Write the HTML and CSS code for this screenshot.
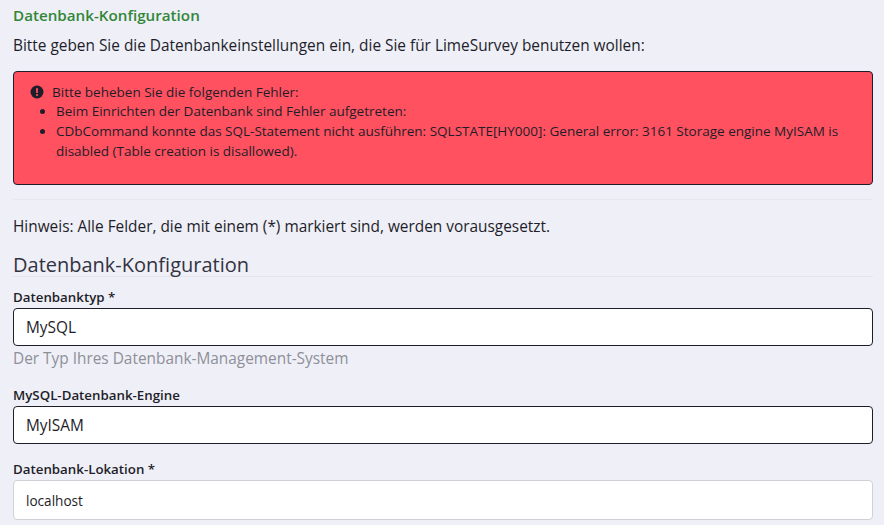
FILE: index.html
```html
<!DOCTYPE html>
<html lang="de">
<head>
<meta charset="utf-8">
<title>Datenbank-Konfiguration</title>
<link rel="stylesheet" href="styles.css">
</head>
<body>
<main class="page">
  <h2 class="step-title">Datenbank-Konfiguration</h2>
  <p class="intro">Bitte geben Sie die Datenbankeinstellungen ein, die Sie für LimeSurvey benutzen wollen:</p>
  <div class="alert">
    <div class="alert-head">
      <svg class="alert-icon" viewBox="0 0 14 14" aria-hidden="true"><circle cx="7" cy="7" r="6.5" fill="#1e1e2a"/><rect x="6.1" y="3" width="1.8" height="5" rx=".6" fill="#ff5060"/><circle cx="7" cy="10" r="1.05" fill="#ff5060"/></svg>
      <span>Bitte beheben Sie die folgenden Fehler:</span>
    </div>
    <ul class="alert-list">
      <li>Beim Einrichten der Datenbank sind Fehler aufgetreten:</li>
      <li>CDbCommand konnte das SQL-Statement nicht ausführen: SQLSTATE[HY000]: General error: 3161 Storage engine MyISAM is disabled (Table creation is disallowed).</li>
    </ul>
  </div>
  <hr class="rule">
  <p class="hint">Hinweis: Alle Felder, die mit einem (*) markiert sind, werden vorausgesetzt.</p>
  <h3 class="legend">Datenbank-Konfiguration</h3>
  <div class="field">
    <label class="label">Datenbanktyp *</label>
    <div class="control select">MySQL</div>
    <div class="help">Der Typ Ihres Datenbank-Management-System</div>
  </div>
  <div class="field">
    <label class="label">MySQL-Datenbank-Engine</label>
    <div class="control select">MyISAM</div>
  </div>
  <div class="field">
    <label class="label">Datenbank-Lokation *</label>
    <div class="control text">localhost</div>
  </div>
</main>
</body>
</html>
```

FILE: styles.css
```css
* { box-sizing: border-box; }
html, body { margin: 0; height: 100%; overflow: hidden; }
body {
  background: #eeeff7;
  color: #1e1e2a;
  font-family: "Open Sans", "Liberation Sans", sans-serif;
  font-size: 15.4px;
}
.page { padding: 6px 11px 0 13px; }
.step-title {
  margin: 0;
  font-size: 15.2px;
  line-height: 18px;
  font-weight: 600;
  color: #328637;
}
.intro { margin: 12px 0 0; line-height: 20px; }
.alert {
  margin-top: 15px;
  height: 114px;
  padding: 10px 16px;
  background: #ff515f;
  border: 1px solid #1e1e2a;
  border-radius: 4px;
  font-size: 13.5px;
  line-height: 20px;
}
.alert-head { display: flex; align-items: center; gap: 8px; height: 19px; }
.alert-icon { width: 14px; height: 14px; flex: none; }
.alert-list { margin: 0; padding: 0 0 0 26px; }
.rule { margin: 14px 0 0; border: 0; border-top: 1px solid #e6e7ee; }
.hint { margin: 15px 0 0; line-height: 24px; }
.legend {
  margin: 15px 0 0;
  font-size: 20px;
  font-weight: 400;
  line-height: 22px;
  color: #33333f;
  border-bottom: 1px solid #e4e5ec;
}
.field { margin-top: 11px; }
.label {
  display: block;
  font-size: 13.3px;
  font-weight: 600;
  line-height: 18px;
  margin-bottom: 2px;
}
.control {
  display: flex;
  align-items: center;
  padding: 0 12px;
  background: #fff;
  border-radius: 4px;
}
.select { height: 38px; border: 1px solid #1e1e2a; font-size: 15.4px; }
.text { height: 40px; border: 1px solid #d0d0d6; font-size: 13.6px; }
.help { margin-top: 2px; color: #8f8f98; line-height: 22px; }
.field + .field { margin-top: 16px; }
```
